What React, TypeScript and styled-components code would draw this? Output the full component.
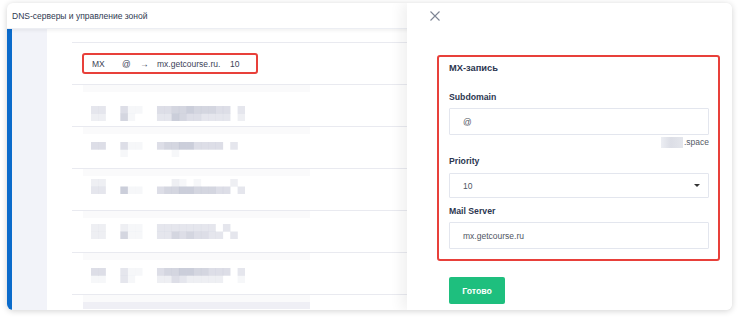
import React from "react";
import styled, { createGlobalStyle } from "styled-components";

const Global = createGlobalStyle`
  html, body { margin: 0; padding: 0; background: #ffffff; }
  body { font-family: "Liberation Sans", Arial, sans-serif; }
  * { box-sizing: border-box; }
`;

const Page = styled.div`
  width: 750px;
  height: 318px;
  padding: 3px 18px 8px 7px;
`;

const Window = styled.div`
  position: relative;
  width: 725px;
  height: 307px;
  border-radius: 6px;
  overflow: hidden;
  background: #fff;
  box-shadow: 0 1px 6px rgba(0, 0, 0, 0.18);
  display: flex;
  flex-direction: column;
`;

const Header = styled.div`
  height: 26px;
  flex: none;
  display: flex;
  align-items: center;
  padding-left: 5px;
  font-size: 8.5px;
  color: #2f3a52;
  border-bottom: 1px solid #eceef3;
  box-shadow: 0 2px 3px rgba(0, 0, 0, 0.05);
  position: relative;
  z-index: 1;
`;

const Body = styled.div`
  flex: 1;
  display: flex;
  min-height: 0;
`;

const Stripe = styled.div`
  width: 5px;
  background: #0b6bcb;
  flex: none;
`;

const Sidebar = styled.div`
  width: 35px;
  background: #f2f3f9;
  flex: none;
`;

const Content = styled.div`
  flex: 1;
  padding: 13px 0 0 25px;
  display: flex;
  flex-direction: column;
`;

const Row = styled.div`
  height: 42px;
  flex: none;
  border-top: 1px solid #e9eaf0;
  display: flex;
  flex-direction: column;
`;

const RowStripe = styled.div<{ $dark?: boolean }>`
  margin-left: 11px;
  width: 227px;
  height: 7px;
  background: ${(p) => (p.$dark ? "#efeff5" : "#fafafb")};
`;

const Highlight = styled.div`
  margin: 10px 0 0 10px;
  width: 176px;
  height: 21px;
  border: 2px solid #e8403a;
  border-radius: 3px;
  display: flex;
  align-items: center;
  padding-left: 8px;
  font-size: 8.5px;
  color: #3c4257;
`;

const Cell = styled.span<{ $w: number }>`
  width: ${(p) => p.$w}px;
  flex: none;
  white-space: nowrap;
`;

const MosaicWrap = styled.div<{ $top: number }>`
  margin: ${(p) => p.$top}px 0 0 19px;
  height: 15px;
`;

const Drawer = styled.div`
  position: absolute;
  top: 0;
  right: 0;
  bottom: 0;
  width: 325px;
  background: #fff;
  z-index: 2;
  box-shadow: -6px 0 12px rgba(0, 0, 0, 0.06);
  padding: 0 12px 0 30px;
  display: flex;
  flex-direction: column;
`;

const CloseBtn = styled.div`
  margin: 8px 0 0 -7px;
  width: 10px;
  height: 10px;
  display: flex;
`;

const FormBox = styled.div`
  margin-top: 34px;
  border: 2px solid #e8403a;
  border-radius: 3px;
  padding: 6px 9px 10px 10px;
  display: flex;
  flex-direction: column;
`;

const Title = styled.div`
  font-size: 9.3px;
  font-weight: bold;
  line-height: 11px;
  color: #2c3650;
`;

const Label = styled.div<{ $top: number }>`
  margin-top: ${(p) => p.$top}px;
  font-size: 8.7px;
  font-weight: bold;
  line-height: 11px;
  color: #2c3650;
`;

const Field = styled.div<{ $h: number; $mt?: number }>`
  margin-top: ${(p) => p.$mt ?? 5}px;
  height: ${(p) => p.$h}px;
  border: 1px solid #e3e6ee;
  border-radius: 1px;
  display: flex;
  align-items: center;
  justify-content: space-between;
  padding: 0 8px 0 13px;
  font-size: 8.5px;
  color: #4f5563;
`;

const Caret = styled.span`
  width: 0;
  height: 0;
  border-left: 3px solid transparent;
  border-right: 3px solid transparent;
  border-top: 3px solid #333;
`;

const Hint = styled.div`
  margin-top: 2px;
  display: flex;
  justify-content: flex-end;
  align-items: center;
  font-size: 8.5px;
  line-height: 11px;
  color: #555a66;
`;

const Blur = styled.span`
  width: 22px;
  height: 11px;
  margin-right: 1px;
  background: linear-gradient(90deg, #eceef3 0%, #dcdee6 45%, #e4e6ec 100%);
`;

const DoneButton = styled.button`
  margin: 16px 0 0 12px;
  width: 56px;
  height: 27px;
  border: none;
  border-radius: 2px;
  background: #1ebf7e;
  color: #fff;
  font-family: "Liberation Sans", Arial, sans-serif;
  font-size: 8.7px;
  font-weight: bold;
  padding: 0;
`;

type MosaicRow = { top: string; bottom: string; offset: number };

const rows: MosaicRow[] = [
  { top: "330041100445565554403", bottom: "220051000336544333302", offset: 14 },
  { top: "440041100455664444030", bottom: "000010000001000000000", offset: 8 },
  { top: "220000000002101000020", bottom: "330061100455665554403", offset: 3 },
  { top: "220021100333333330300", bottom: "220051100335454433030", offset: 6 },
  { top: "440031100455665544403", bottom: "110031000224322222001", offset: 8 },
];

const CW = 7.33;

function Mosaic({ top, bottom }: { top: string; bottom: string }) {
  const rects: React.ReactElement[] = [];
  [top, bottom].forEach((line, r) => {
    line.split("").forEach((ch, i) => {
      const v = Number(ch);
      if (v === 0) return;
      rects.push(
        <rect
          key={`${r}-${i}`}
          x={i * CW}
          y={r * 7.5}
          width={CW + 0.2}
          height={7.7}
          fill="#a9adc2"
          fillOpacity={v / 10}
        />
      );
    });
  });
  return (
    <svg width={21 * CW} height={15} viewBox={`0 0 ${21 * CW} 15`}>
      {rects}
    </svg>
  );
}

export default function App() {
  return (
    <>
      <Global />
      <Page>
        <Window>
          <Header>DNS-серверы и управление зоной</Header>
          <Body>
            <Stripe />
            <Sidebar />
            <Content>
              <Row>
                <Highlight>
                  <Cell $w={30}>MX</Cell>
                  <Cell $w={18}>@</Cell>
                  <Cell $w={17}>→</Cell>
                  <Cell $w={73}>mx.getcourse.ru.</Cell>
                  <Cell $w={14}>10</Cell>
                </Highlight>
              </Row>
              {rows.map((r, i) => (
                <Row key={i}>
                  <RowStripe />
                  <MosaicWrap $top={r.offset}>
                    <Mosaic top={r.top} bottom={r.bottom} />
                  </MosaicWrap>
                </Row>
              ))}
              <Row>
                <RowStripe />
                <RowStripe $dark />
              </Row>
            </Content>
          </Body>
          <Drawer>
            <CloseBtn>
              <svg width="10" height="10" viewBox="0 0 10 10">
                <path d="M0.5 0.5 L9.5 9.5 M9.5 0.5 L0.5 9.5" stroke="#7e8594" strokeWidth="1.1" fill="none" />
              </svg>
            </CloseBtn>
            <FormBox>
              <Title>MX-запись</Title>
              <Label $top={18}>Subdomain</Label>
              <Field $h={27} $mt={5}>@</Field>
              <Hint>
                <Blur />
                .space
              </Hint>
              <Label $top={8}>Priority</Label>
              <Field $h={25} $mt={6}>
                10
                <Caret />
              </Field>
              <Label $top={8}>Mail Server</Label>
              <Field $h={27} $mt={5}>mx.getcourse.ru</Field>
            </FormBox>
            <div>
              <DoneButton>Готово</DoneButton>
            </div>
          </Drawer>
        </Window>
      </Page>
    </>
  );
}
